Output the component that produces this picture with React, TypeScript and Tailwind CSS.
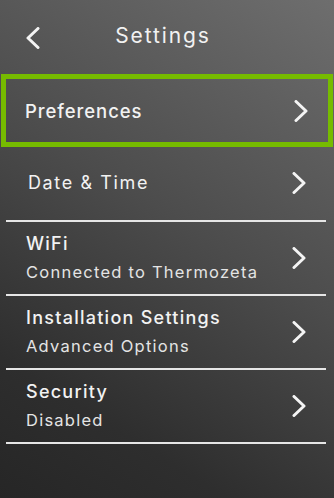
import React from 'react';

interface MenuItem {
  title: string;
  subtitle?: string;
}

const items: MenuItem[] = [
  { title: 'WiFi', subtitle: 'Connected to Thermozeta' },
  { title: 'Installation Settings', subtitle: 'Advanced Options' },
  { title: 'Security', subtitle: 'Disabled' },
];

function Chevron({ dir = 'right' }: { dir?: 'left' | 'right' }) {
  return (
    <svg width="14" height="22" viewBox="0 0 14 22" className="shrink-0">
      <polyline
        points={dir === 'right' ? '2,1.5 12,11 2,20.5' : '12,1.5 2,11 12,20.5'}
        fill="none"
        stroke="#f4f4f4"
        strokeWidth="3"
        strokeLinecap="round"
        strokeLinejoin="round"
      />
    </svg>
  );
}

export default function App() {
  return (
    <div
      className="w-[334px] h-[498px] overflow-hidden bg-[linear-gradient(212deg,#6e6e6e_0%,#4c4c4c_45%,#2e2e2e_80%,#262626_100%)] text-[#f2f2f2] tracking-[0.07em]"
      style={{ fontFamily: 'Inter, "Liberation Sans", sans-serif' }}
    >
      {/* header */}
      <div className="relative h-[74px] flex items-center justify-center pb-[2px]">
        <div className="absolute left-[26px] top-[27px]">
          <Chevron dir="left" />
        </div>
        <h1 className="text-[21px] font-normal tracking-[0.09em] pr-[8px]">Settings</h1>
      </div>

      {/* selected item */}
      <div className="mx-px h-[73px] border-[5px] border-[#76bb00] flex items-center justify-between pl-[19px] pr-[20px]">
        <span className="text-[18.5px] font-medium tracking-[0.05em] pt-[2px]">Preferences</span>
        <Chevron />
      </div>

      <div className="ml-[6px] w-[320px]">
        <div className="h-[75px] flex items-center justify-between pl-[22px] pr-[20px] border-b-2 border-[#e6e6e6] pb-[2px]">
          <span className="text-[18px] tracking-[0.09em]">Date &amp; Time</span>
          <Chevron />
        </div>
        {items.map((item) => (
          <div
            key={item.title}
            className="h-[74px] flex items-center justify-between pl-5 pr-[20px] border-b-2 border-[#e6e6e6]"
          >
            <div className="flex flex-col leading-none gap-[11px]">
              <span className="text-[18px] font-medium tracking-[0.07em]">{item.title}</span>
              <span className="text-[16.5px] text-[#e4e4e4] tracking-[0.075em]">{item.subtitle}</span>
            </div>
            <Chevron />
          </div>
        ))}
      </div>
    </div>
  );
}
